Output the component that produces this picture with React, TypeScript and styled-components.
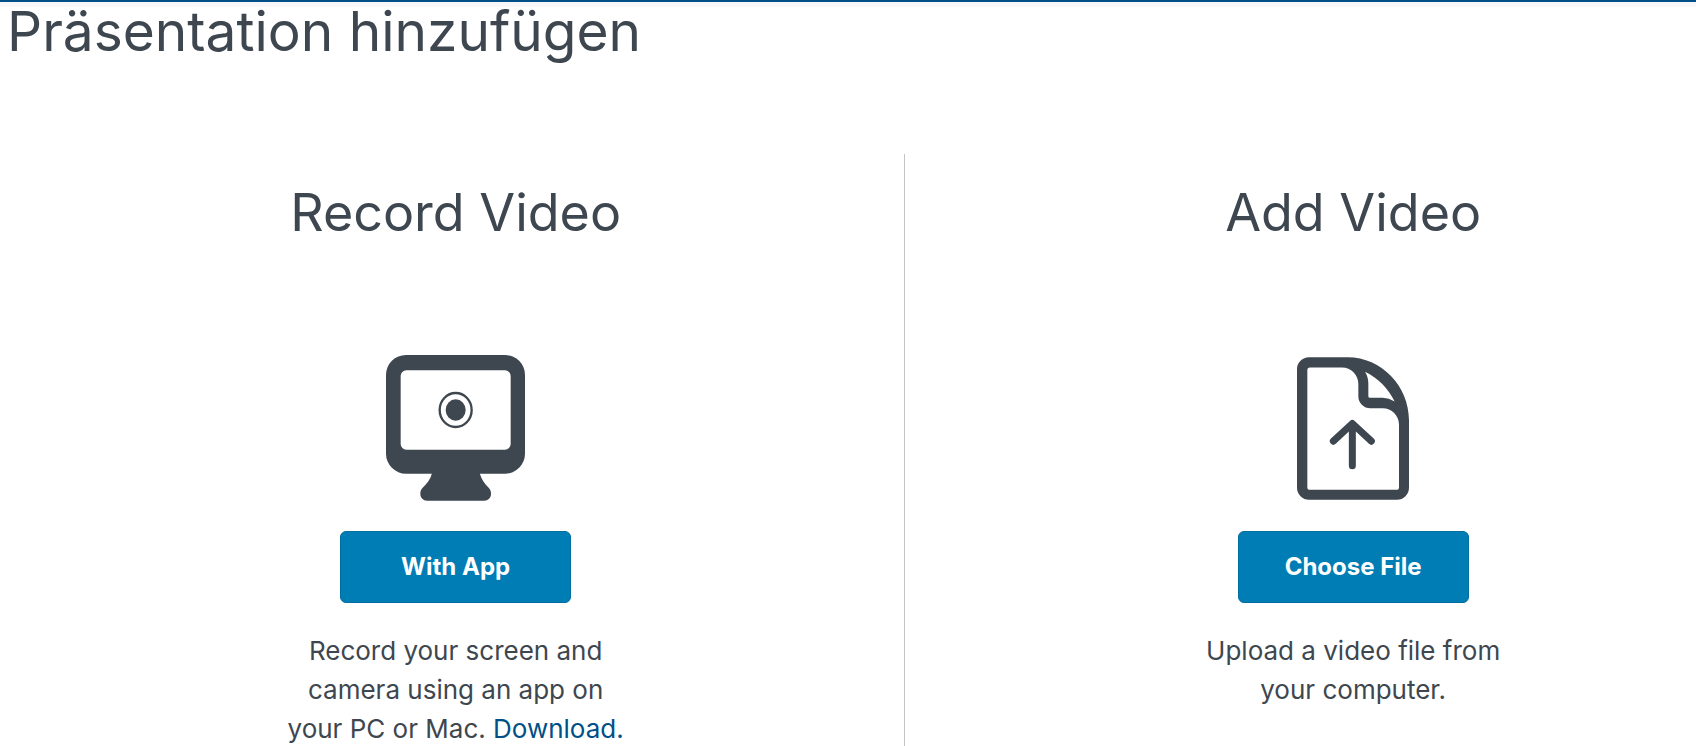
import React from 'react';
import styled, { createGlobalStyle } from 'styled-components';

const ink = '#3e474f';
const blue = '#007db5';
const navy = '#004f87';

const GlobalStyle = createGlobalStyle`
  *, *::before, *::after { box-sizing: border-box; }
  body {
    margin: 0;
    background: #fff;
    color: ${ink};
    font-family: Inter, "Open Sans", sans-serif;
    font-weight: 400;
    overflow: hidden;
  }
`;

const TopBar = styled.div`
  height: 7px;
  background: #f8f8f8;
  border-top: 2px solid ${navy};
`;

const Page = styled.main`
  padding-left: 7px;
`;

const Title = styled.h1`
  margin: 0 0 99px;
  font-size: 55px;
  line-height: 48px;
  font-weight: 400;
`;

const Columns = styled.div`
  display: grid;
  grid-template-columns: 17fr 15fr;
`;

const Column = styled.section<{ $divided?: boolean }>`
  display: flex;
  flex-direction: column;
  align-items: center;
  padding: 27px 0 32px ${p => (p.$divided ? '105px' : '0')};
  border-left: ${p => (p.$divided ? '1px solid #c4c4c4' : '0')};
`;

const Heading = styled.h2`
  margin: 0 0 110px;
  font-size: 52px;
  line-height: 64px;
  font-weight: 400;
`;

const IconBox = styled.div`
  display: flex;
  align-items: center;
  height: 146px;
  margin-bottom: 30px;
`;

const Button = styled.button`
  width: 231px;
  height: 72px;
  padding: 0;
  border: 1px solid #006e9f;
  border-radius: 6px;
  background: ${blue};
  color: #fff;
  font: 700 24px/32px Inter, "Open Sans", sans-serif;
  cursor: pointer;
`;

const Text = styled.p`
  max-width: 340px;
  margin: 28px 0 0;
  font-size: 26px;
  line-height: 39px;
  text-align: center;
`;

const Link = styled.a`
  color: ${navy};
  text-decoration: none;
`;

const MonitorIcon = () => (
  <svg width="139" height="146" viewBox="48 45 417 438" fill={ink} aria-hidden="true">
    <path
      fillRule="evenodd"
      d="M108 45H405A60 60 0 0 1 465 105V341A60 60 0 0 1 405 401H108A60 60 0 0 1 48 341V105A60 60 0 0 1 108 45ZM109 91A17 17 0 0 0 92 108V312A17 17 0 0 0 109 329H405A17 17 0 0 0 422 312V108A17 17 0 0 0 405 91Z"
    />
    <path d="M186 390V400C181 419 170 432 158 443C152 449 151 454 151 462C151 474 160 482 171 482H343C354 482 363 474 363 462C363 454 362 449 356 443C344 432 335 419 329 400V390Z" />
    <ellipse cx="257" cy="210" rx="48" ry="51" fill="none" stroke={ink} strokeWidth="7" />
    <ellipse cx="257" cy="210" rx="30" ry="32" />
  </svg>
);

const FileIcon = () => (
  <svg width="112" height="143" viewBox="52 51 336 428" fill={ink} aria-hidden="true">
    <path
      fillRule="evenodd"
      d="M88 51H204C306 51 388 138 388 240V443A36 36 0 0 1 352 479H88A36 36 0 0 1 52 443V87A36 36 0 0 1 88 51ZM91 82A8 8 0 0 0 83 90V441A8 8 0 0 0 91 449H350A8 8 0 0 0 358 441V253C358 226 336 204 309 204H272A36 36 0 0 1 236 168V131C236 104 214 82 187 82ZM256 95C263 106 266 118 266 131V168Q266 173 271 173H309Q328 174 345 184C326 145 295 114 256 95Z"
    />
    <path
      d="M218 377V251M161 303L218 250L275 303"
      fill="none"
      stroke={ink}
      strokeWidth="21"
      strokeLinecap="round"
      strokeLinejoin="round"
    />
  </svg>
);

export default function App() {
  return (
    <>
      <GlobalStyle />
      <TopBar />
      <Page>
        <Title>Präsentation hinzufügen</Title>
        <Columns>
          <Column>
            <Heading>Record Video</Heading>
            <IconBox><MonitorIcon /></IconBox>
            <Button type="button">With App</Button>
            <Text>
              Record your screen and camera using an app on your PC or Mac.{' '}
              <Link href="#download">Download.</Link>
            </Text>
          </Column>
          <Column $divided>
            <Heading>Add Video</Heading>
            <IconBox><FileIcon /></IconBox>
            <Button type="button">Choose File</Button>
            <Text>Upload a video file from your computer.</Text>
          </Column>
        </Columns>
      </Page>
    </>
  );
}
